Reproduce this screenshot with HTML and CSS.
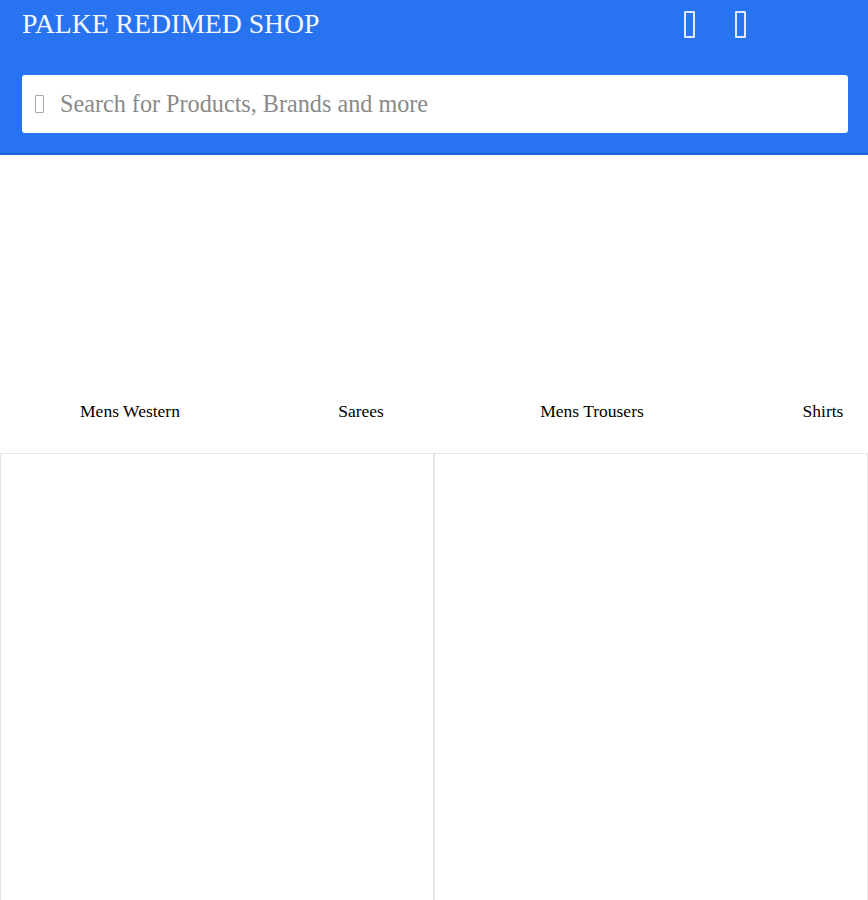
FILE: index.html
```html
<!DOCTYPE html>
<html>

<head>
  <meta charset="utf-8">
  <title>Palke Redimed Shop</title>
  <link rel="stylesheet" href="styles.css">
</head>

<body>

  <header class="header">
    <div class="topbar">
      <h1 class="brand">PALKE REDIMED SHOP</h1>
      <div class="actions">
        <span class="tofu tofu-light"></span>
        <span class="tofu tofu-light"></span>
      </div>
    </div>
    <div class="search">
      <span class="tofu tofu-grey"></span>
      <span class="search-text">Search for Products, Brands and more</span>
    </div>
  </header>

  <div class="categories">
    <div class="category">
      <div class="category-img"></div>
      <p>Mens Western</p>
    </div>
    <div class="category">
      <div class="category-img"></div>
      <p>Sarees</p>
    </div>
    <div class="category">
      <div class="category-img"></div>
      <p>Mens Trousers</p>
    </div>
    <div class="category">
      <div class="category-img"></div>
      <p>Shirts</p>
    </div>
  </div>

  <div class="products">
    <div class="card"></div>
    <div class="card"></div>
  </div>

</body>

</html>
```

FILE: styles.css
```css
body {
  margin: 0;
  padding: 0;
  background-color: #ffffff;
  font-family: "Liberation Serif", "Times New Roman", serif;
  color: #000000;
  overflow: hidden;
}

.header {
  background-color: #2874f0;
  padding: 0 20px 20px 22px;
  border-bottom: 2px solid #1d62d8;
}

.topbar {
  height: 48px;
  display: flex;
  align-items: center;
  justify-content: space-between;
}

.brand {
  margin: 0;
  font-size: 27.7px;
  font-weight: normal;
  color: #f4f7ff;
}

.actions {
  display: flex;
  gap: 40px;
  margin-right: 102px;
}

.tofu {
  display: inline-block;
  box-sizing: border-box;
}

.tofu-light {
  width: 11px;
  height: 27px;
  border: 2px solid rgba(255, 255, 255, 0.85);
  border-radius: 1px;
}

.tofu-grey {
  width: 9px;
  height: 18px;
  border: 1.5px solid #a8a8a8;
  border-radius: 1px;
}

.search {
  margin-top: 27px;
  height: 58px;
  background-color: #ffffff;
  border-radius: 3px;
  display: flex;
  align-items: center;
  gap: 16px;
  padding-left: 13px;
}

.search-text {
  font-size: 24.2px;
  color: #8a8a8a;
}

.categories {
  display: flex;
  gap: 31px;
  padding: 10px 0 31px 30px;
  overflow: hidden;
}

.category {
  flex: 0 0 200px;
  text-align: center;
}

.category-img {
  height: 236px;
}

.category p {
  margin: 0;
  font-size: 17.5px;
  line-height: 21px;
  white-space: nowrap;
}

.products {
  display: grid;
  grid-template-columns: 1fr 1fr;
}

.card {
  height: 460px;
  border: 1px solid #e6e6e6;
}
```
